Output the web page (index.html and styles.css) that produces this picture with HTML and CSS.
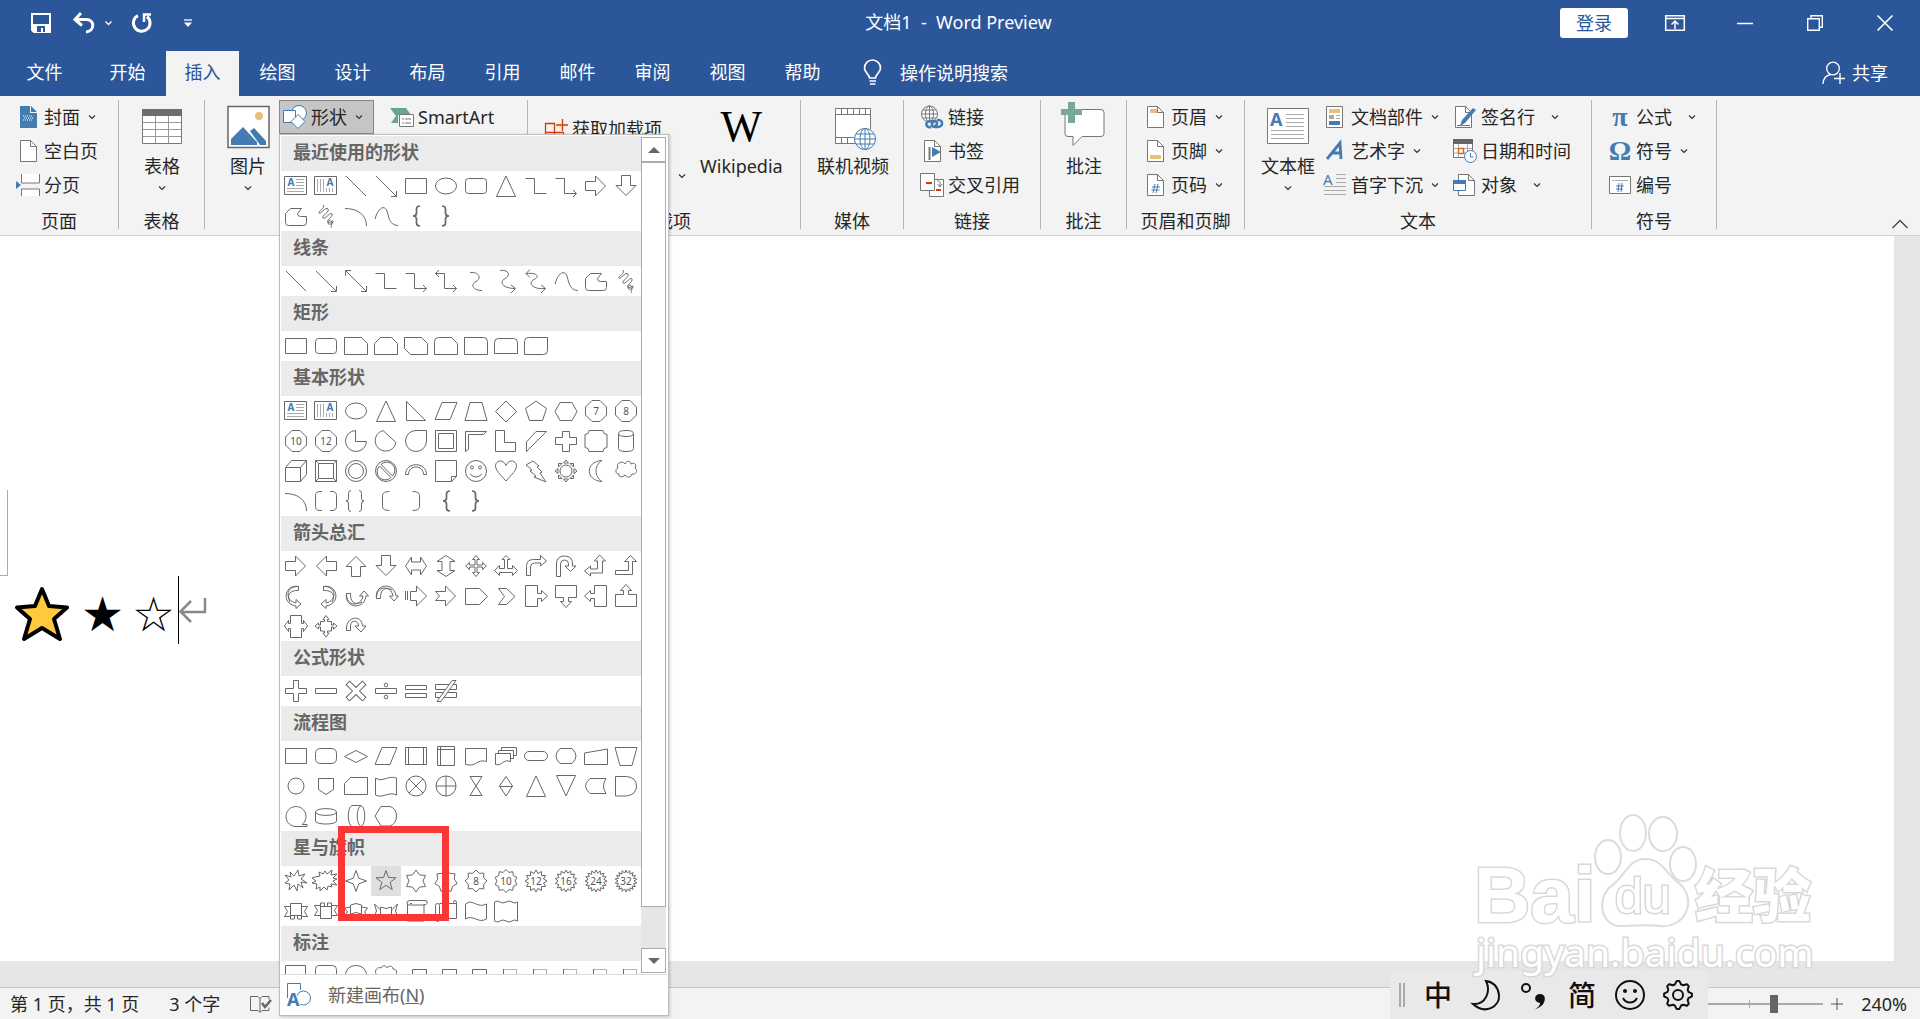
FILE: index.html
```html
<!DOCTYPE html>
<html lang="zh-CN">
<head>
    <meta charset="UTF-8">
    <title>文档1 - Word Preview</title>
    <link rel="stylesheet" href="styles.css">
</head>
<body>
    <svg class="defs" width="0" height="0">
        <symbol id="chev" viewBox="0 0 8 8"><path d="M1 2.500l3 3 3-3" fill="none" stroke="#333" stroke-width="1.200"/></symbol>
        <symbol id="page" viewBox="0 0 24 24"><path d="M4.500 1.500h10l6 6v15h-16z" fill="#fff" stroke="#777"/><path d="M14.500 1.500v6h6" fill="none" stroke="#777"/></symbol>
    </svg>

    <header>
        <div class="titlebar">
            <div class="quick">
                <button class="q-btn" aria-label="保存"><svg width="20" height="20" viewBox="0 0 20 20"><path d="M1 1h18v18H3l-2-2z" fill="none" stroke="#fff" stroke-width="2"/><path d="M2 11h16v8H2z" fill="#fff"/><path d="M6 13h8v6h-2v-4h-2v4H6z" fill="#2b579a"/></svg></button>
                <div class="undo">
                    <button class="q-btn" aria-label="撤消"><svg width="24" height="22" viewBox="0 0 24 22"><path d="M9 1L3 7.500l7 6M3.500 7.500H14c9 0 9 12 0 12.500" fill="none" stroke="#fff" stroke-width="3"/></svg></button>
                    <svg width="10" height="10" viewBox="0 0 10 10"><path d="M1.500 3.500l3 3 3-3" fill="none" stroke="#fff" stroke-width="1.300"/></svg>
                </div>
                <button class="q-btn" aria-label="重复"><svg width="22" height="22" viewBox="0 0 22 22"><path d="M7 3.500A8.300 8.300 0 1 0 16 4.500" fill="none" stroke="#fff" stroke-width="3"/><path d="M13 10V2.500h7" fill="none" stroke="#fff" stroke-width="2.500"/></svg></button>
                <button class="q-more" aria-label="自定义"><svg width="8" height="8" viewBox="0 0 8 8"><path d="M0 1h8" stroke="#fff" stroke-width="1.300"/><path d="M0 3.500h8L4 8z" fill="#fff"/></svg></button>
            </div>
            <h1>文档1&nbsp; -&nbsp; Word Preview</h1>
            <div class="window-tools">
                <button class="login">登录</button>
                <button class="win-btn" aria-label="功能区显示选项"><svg width="20" height="16" viewBox="0 0 20 16"><path d="M.7.700h18.600v14.600H.7zM1 3.500h18M10 14V6M6.500 9.500L10 6l3.500 3.500" fill="none" stroke="#fff" stroke-width="1.500"/></svg></button>
                <button class="win-btn" aria-label="最小化"><svg width="16" height="16" viewBox="0 0 16 16"><path d="M0 8.500h16" stroke="#fff" stroke-width="1.500"/></svg></button>
                <button class="win-btn" aria-label="向下还原"><svg width="16" height="16" viewBox="0 0 16 16"><path d="M.7 3.700h11.600v11.600H.7zM4 3.500V.700h11.300v11.600h-3" fill="none" stroke="#fff" stroke-width="1.400"/></svg></button>
                <button class="win-btn" aria-label="关闭"><svg width="16" height="16" viewBox="0 0 16 16"><path d="M.5.500l15 15M15.500.500l-15 15" stroke="#fff" stroke-width="1.600"/></svg></button>
            </div>
        </div>
        <nav class="tabs">
            <button class="tab file">文件</button>
            <button class="tab">开始</button>
            <button class="tab active">插入</button>
            <button class="tab">绘图</button>
            <button class="tab">设计</button>
            <button class="tab">布局</button>
            <button class="tab">引用</button>
            <button class="tab">邮件</button>
            <button class="tab">审阅</button>
            <button class="tab">视图</button>
            <button class="tab">帮助</button>
            <button class="tell-me">
                <svg width="20" height="26" viewBox="0 0 20 26"><path d="M6.500 18c0-4-5-5-5-10a8 8 0 0 1 16 0c0 5-5 6-5 10zM6.500 21h6.500M7 24h5.500" fill="none" stroke="#fff" stroke-width="1.600"/></svg>
                操作说明搜索
            </button>
            <button class="share">
                <svg width="24" height="24" viewBox="0 0 24 24"><circle cx="11" cy="7.500" r="6.300" fill="none" stroke="#fff" stroke-width="1.300"/><path d="M1 23c0-5 3-9 8-9.500M18 12v11M12 17.500h11" fill="none" stroke="#fff" stroke-width="1.400"/></svg>
                共享
            </button>
        </nav>
    </header>

    <div class="ribbon">
        <section class="group g-pages">
            <div class="group-body">
                <div class="col">
                    <button class="item"><svg class="ico" viewBox="0 0 24 24"><path d="M4 1h10v7h7v15H4z" fill="#447bb3"/><path d="M15 1l6 6h-6z" fill="#447bb3"/><path d="M7 11h10M8 13h10M7 15h10" stroke="#fff" stroke-dasharray="1 1"/></svg>封面<svg class="chev"><use href="#chev"/></svg></button>
                    <button class="item"><svg class="ico"><use href="#page"/></svg>空白页</button>
                    <button class="item"><svg class="ico" viewBox="0 0 24 24"><path d="M5.500 1v9h18V1M5.500 23v-7h18v7" fill="#fff" stroke="#777"/><path d="M0 8l5 4-5 4z" fill="#447bb3"/></svg>分页</button>
                </div>
            </div>
            <h2>页面</h2>
        </section>
        <section class="group g-table">
            <div class="group-body">
                <button class="big"><svg class="big-ico" viewBox="0 0 46 44"><path d="M3.500 5.500h39v34h-39z" fill="#fff" stroke="#777"/><path d="M3 5h40v7H3z" fill="#6d6d6d"/><path d="M4 18.500h38M4 25.500h38M4 32.500h38M16.500 12v27M29.500 12v27" stroke="#999"/></svg>表格<svg class="chev"><use href="#chev"/></svg></button>
            </div>
            <h2>表格</h2>
        </section>
        <section class="group g-pics">
            <div class="group-body">
                <button class="big"><svg class="big-ico" viewBox="0 0 46 44"><path d="M3 2.500h41v41H3z" fill="#fff" stroke="#666" stroke-width="1.500"/><circle cx="34" cy="12" r="4" fill="#e8bf78"/><path d="M6 41v-6l12-12 14 15v3z" fill="#447bb3"/><path d="M25 27l4-3 12 13v4h-6z" fill="#447bb3"/></svg>图片<svg class="chev"><use href="#chev"/></svg></button>
                <div class="shapes-wrap">
                    <button class="item open"><svg class="ico" viewBox="0 0 24 24"><circle cx="16" cy="8" r="7.500" fill="#fff" stroke="#447bb3"/><path d="M.5 5.500h12v12H.5z" fill="#fff" stroke="#447bb3"/><path d="M15 9.500l7 7-7 7-7-7z" fill="#fff" stroke="#447bb3"/></svg>形状<svg class="chev"><use href="#chev"/></svg></button>
                    <div class="menu">
                        <div class="menu-main">
                            <div class="gallery" id="gallery"></div>
                            <div class="scroll">
                                <button aria-label="向上"><svg width="12" height="6"><path d="M0 6l6-6 6 6z" fill="#666"/></svg></button>
                                <div class="thumb"></div>
                                <button aria-label="向下"><svg width="12" height="6"><path d="M0 0h12L6 6z" fill="#666"/></svg></button>
                            </div>
                        </div>
                        <button class="new-canvas"><svg class="ico" viewBox="0 0 24 24"><path d="M.5 15V.500h13V7" fill="none" stroke="#447bb3"/><circle cx="16.500" cy="15" r="7" fill="#fff" stroke="#447bb3"/><text x="0" y="23" font-size="18" font-weight="bold" fill="#447bb3" stroke="#fff" stroke-width="2" paint-order="stroke">A</text></svg><span>新建画布(<u>N</u>)</span></button>
                    </div>
                </div>
                <button class="item"><svg class="ico" viewBox="0 0 24 24"><path d="M0 3h16l5 7H8v8H1l5-7z" fill="#67a58e"/><path d="M9.500 9.500h14v12h-14z" fill="#fff" stroke="#777"/><path d="M12 14h2M15 14h6M12 18h2M15 18h6" stroke="#777"/></svg>SmartArt</button>
            </div>
        </section>
        <section class="group g-addins">
            <div class="group-body">
                <button class="item get"><svg class="ico" viewBox="0 0 24 24"><path d="M1.500 6.500h9v17h-9zM1.500 15.500h18v8h-9v-8M18.500 2v12M12 8h12" fill="none" stroke="#d83b01" stroke-width="1.300"/></svg>获取加载项</button>
                <svg class="chev my"><use href="#chev"/></svg>
                <button class="big wiki"><span class="wiki-w">W</span>Wikipedia</button>
            </div>
            <h2>加载项</h2>
        </section>
        <section class="group g-media">
            <div class="group-body">
                <button class="big"><svg class="big-ico" viewBox="0 0 46 44"><path d="M5.500 4.500h35v35h-35z" fill="#fff" stroke="#777"/><path d="M6 10.500h34M6 33.500h34M11.500 5v5M17.500 5v5M23.500 5v5M29.500 5v5M35.500 5v5M11.500 34v5M17.500 34v5" stroke="#777"/><circle cx="35" cy="35" r="11" fill="#f3f3f3"/><g transform="translate(24 24)" fill="#fff" stroke="#447bb3"><circle cx="11" cy="11" r="10.500"/><ellipse cx="11" cy="11" rx="5" ry="10.500"/><path d="M11 0v22M0 11h22M2 6h18M2 16h18" fill="none"/></g></svg>联机视频</button>
            </div>
            <h2>媒体</h2>
        </section>
        <section class="group g-links">
            <div class="group-body">
                <div class="col">
                    <button class="item"><svg class="ico" viewBox="0 0 24 24"><g fill="#fff" stroke="#777"><circle cx="9.500" cy="9" r="8"/><ellipse cx="9.500" cy="9" rx="4" ry="8"/><path d="M1.500 9h16M3 5h13M3 13h13M9.500 1v16" fill="none"/></g><path d="M11 22c-5 1-7-5-1-6h4c4 0 4 5 0 5M17 15c6-1 7 6 1 7h-3c-4 0-4-4-1-5" fill="none" stroke="#447bb3" stroke-width="2.500"/></svg>链接</button>
                    <button class="item"><svg class="ico"><use href="#page"/><path d="M9.500 8v13" stroke="#777" stroke-width="2"/><path d="M12 8l9 5-9 5z" fill="#447bb3"/></svg>书签</button>
                    <button class="item"><svg class="ico" viewBox="0 0 24 24"><path d="M9.500 6.500h14v17h-14z" fill="#fff" stroke="#777"/><path d="M.5.500h14v17H.5z" fill="#fff" stroke="#777"/><path d="M6 10h6M16 17h5" stroke="#d83b01" stroke-width="2"/><path d="M17 8c4 0 3 2 3 5M17.500 11l2.500 3 2-3" fill="none" stroke="#777"/></svg>交叉引用</button>
                </div>
            </div>
            <h2>链接</h2>
        </section>
        <section class="group g-comment">
            <div class="group-body">
                <button class="big"><svg class="big-ico" viewBox="0 0 46 44"><path d="M7 5.500h33q3 0 3 3v21q0 3-3 3H21l-9 9v-9H7q-3 0-3-3v-21q0-3 3-3z" fill="#fff" stroke="#777"/><path d="M7-2h7v7h7v6h-7v8H7v-8H0V5h7z" fill="#77a898"/></svg>批注</button>
            </div>
            <h2>批注</h2>
        </section>
        <section class="group g-header">
            <div class="group-body">
                <div class="col">
                    <button class="item"><svg class="ico"><use href="#page"/><path d="M7 4h7v4H7z" fill="#e8bf78"/></svg>页眉<svg class="chev"><use href="#chev"/></svg></button>
                    <button class="item"><svg class="ico"><use href="#page"/><path d="M7 16h11v4H7z" fill="#e8bf78"/></svg>页脚<svg class="chev"><use href="#chev"/></svg></button>
                    <button class="item"><svg class="ico"><use href="#page"/><path d="M12 11l-2 9M15 11l-2 9M9 14h8M8.500 17h8" stroke="#447bb3"/></svg>页码<svg class="chev"><use href="#chev"/></svg></button>
                </div>
            </div>
            <h2>页眉和页脚</h2>
        </section>
        <section class="group g-text">
            <div class="group-body">
                <button class="big"><svg class="big-ico" viewBox="0 0 46 44"><path d="M2.500 4.500h41v35h-41z" fill="#fff" stroke="#777"/><path d="M21 10.500h18M21 14.500h18M21 18.500h18M21 22.500h18M6 26.500h33M6 30.500h33M6 34.500h33" stroke="#aaa"/><text x="5" y="22" font-size="18" font-weight="bold" fill="#447bb3">A</text></svg>文本框<svg class="chev"><use href="#chev"/></svg></button>
                <div class="col">
                    <button class="item"><svg class="ico" viewBox="0 0 24 24"><path d="M3.500 1.500h16v21h-16z" fill="#fff" stroke="#777"/><path d="M6 4h11v4H6z" fill="#e8bf78"/><path d="M6 10h5v4H6z" fill="#aaa"/><path d="M13 10.500h4M13 13.500h4" stroke="#aaa"/><path d="M6 16h11v4H6z" fill="#447bb3"/></svg>文档部件<svg class="chev"><use href="#chev"/></svg></button>
                    <button class="item"><svg class="ico" viewBox="0 0 24 24"><path d="M4 20L17 4l1 16M9 14h9" fill="none" stroke="#447bb3" stroke-width="2.800"/></svg>艺术字<svg class="chev"><use href="#chev"/></svg></button>
                    <button class="item"><svg class="ico" viewBox="0 0 24 24"><path d="M13 1.500h10M13 5.500h10M13 9.500h10M1 13.500h22M1 17.500h22M1 21.500h22" stroke="#aaa"/><text x="0" y="12" font-size="15" fill="#447bb3">A</text></svg>首字下沉<svg class="chev"><use href="#chev"/></svg></button>
                </div>
                <div class="col">
                    <button class="item"><svg class="ico"><use href="#page" x="-2"/><path d="M20 3l3 2L12 18l-5 3 2-6z" fill="#447bb3"/><path d="M4 20.500h13" stroke="#447bb3"/></svg>签名行<svg class="chev far"><use href="#chev"/></svg></button>
                    <button class="item"><svg class="ico" viewBox="0 0 24 24"><path d="M.5 1.500h19v17H.5z" fill="#fff" stroke="#777"/><path d="M0 0h20v5H0z" fill="#666"/><path d="M1 9.500h18M1 14h18M5.500 5v13M14.500 5v13" stroke="#aaa"/><path d="M5.500 9.500h5v5h-5z" fill="#fff" stroke="#d86b20" stroke-width="1.500"/><circle cx="17.500" cy="17.500" r="6" fill="#fff" stroke="#447bb3"/><path d="M17.500 14v4h3" fill="none" stroke="#447bb3"/></svg>日期和时间</button>
                    <button class="item"><svg class="ico"><use href="#page" x="1"/><path d="M.5 7.500h12v10H.5z" fill="#fff" stroke="#447bb3"/><path d="M0 7h13v4H0z" fill="#447bb3"/></svg>对象<svg class="chev far"><use href="#chev"/></svg></button>
                </div>
            </div>
            <h2>文本</h2>
        </section>
        <section class="group g-symbol">
            <div class="group-body">
                <div class="col">
                    <button class="item"><span class="ico glyph">π</span>公式<svg class="chev far"><use href="#chev"/></svg></button>
                    <button class="item"><span class="ico glyph">Ω</span>符号<svg class="chev"><use href="#chev"/></svg></button>
                    <button class="item"><svg class="ico" viewBox="0 0 24 24"><path d="M1.500 3.500h21v17h-21z" fill="#fff" stroke="#777"/><path d="M4 7.500h2M7 7.500h13" stroke="#aaa"/><path d="M11 10l-1 9M14 10l-1 9M8 13h8M8 16h7" stroke="#447bb3"/></svg>编号</button>
                </div>
            </div>
            <h2>符号</h2>
        </section>
        <button class="collapse" aria-label="折叠功能区"><svg width="16" height="10" viewBox="0 0 16 10"><path d="M.5 9L8 1.500 15.500 9" fill="none" stroke="#444" stroke-width="1.300"/></svg></button>
    </div>

    <main class="workspace">
        <div class="sheet">
            <div class="margin-corner"></div>
            <div class="doc-line">
                <svg class="emoji" width="56" height="56" viewBox="0 0 56 56"><path d="M28 3l7 17 18 1.500L40 33l6 20-18-11-18 11 6-20L3 21.500 21 20z" fill="#ffc83d" stroke="#000" stroke-width="4" stroke-linejoin="round"/></svg>
                <span>★</span>
                <span>☆</span>
                <i class="caret"></i>
                <svg class="return" width="28" height="28" viewBox="0 0 28 28"><path d="M26 2v14H2M12 5L1.500 15.500 12 26" fill="none" stroke="#888" stroke-width="2.500"/></svg>
            </div>
        </div>
    </main>

    <footer class="status">
        <span>第 1 页，共 1 页</span>
        <span>3 个字</span>
        <svg width="22" height="18" viewBox="0 0 22 18"><path d="M10 3.500L8 1.500H.5v14H8l2 2 2-2h7v-3M10 3v14M10 3.500l2-2h7v3" fill="none" stroke="#666"/><path d="M12 8l3 4 6-7" fill="none" stroke="#666" stroke-width="2.500"/></svg>
        <div class="zoom">
            <input type="range" min="0" max="100" value="68" aria-label="缩放">
            <button aria-label="放大"><svg width="12" height="12"><path d="M6 0v12M0 6h12" stroke="#555"/></svg></button>
            <span>240%</span>
        </div>
    </footer>

    <svg class="watermark" width="350" height="180" viewBox="0 0 350 180">
        <g fill="#fff" stroke="#dcdcdc" stroke-width="2">
            <ellipse cx="134" cy="45" rx="13" ry="17"/>
            <ellipse cx="159" cy="21" rx="13" ry="18"/>
            <ellipse cx="189" cy="22" rx="14" ry="17"/>
            <ellipse cx="209" cy="52" rx="13" ry="17"/>
            <path d="M171 47c-17 0-20 18-35 28-14 13-9 40 12 39 12 0 24-2 38 0 24 3 38-25 20-42-16-12-18-25-35-25z"/>
        </g>
        <g class="mark">
            <text x="0" y="110" class="wm-bai">Bai</text>
            <text x="141" y="101" class="wm-du">du</text>
            <text x="221" y="105" class="wm-cn">经验</text>
            <text x="2" y="155" class="wm-url">jingyan.baidu.com</text>
        </g>
    </svg>

    <div class="ime">
        <i class="grip"></i>
        <button>中</button>
        <button aria-label="半角"><svg width="30" height="32" viewBox="0 0 30 32"><path d="M15 2c5 10 0 24-13 23 12 11 27 3 26-9C27 8 22 3 15 2z" fill="none" stroke="#111" stroke-width="2"/></svg></button>
        <button aria-label="标点"><svg width="30" height="32" viewBox="0 0 30 32"><circle cx="7" cy="9" r="4" fill="none" stroke="#111" stroke-width="2"/><path d="M16 30c4-2 5-4 5-6-7-1-6-9 0-9 8 0 6 13-5 15z" fill="#111"/></svg></button>
        <button>简</button>
        <button aria-label="表情"><svg width="32" height="32" viewBox="0 0 32 32"><circle cx="16" cy="16" r="14" fill="none" stroke="#111" stroke-width="2"/><circle cx="11" cy="12" r="2" fill="#111"/><circle cx="21" cy="12" r="2" fill="#111"/><path d="M9 19c3 6 11 6 14 0" fill="none" stroke="#111" stroke-width="2"/></svg></button>
        <button aria-label="设置"><svg width="32" height="32" viewBox="0 0 32 32"><path id="gear" fill="none" stroke="#111" stroke-width="2" stroke-linejoin="round"/><circle cx="16" cy="16" r="5" fill="none" stroke="#111" stroke-width="2"/></svg></button>
    </div>

    <script src="script.js"></script>
</body>
</html>
```
FILE: styles.css
```css
* {
    box-sizing: border-box;
}
body {
    margin: 0;
    height: 100vh;
    display: flex;
    flex-direction: column;
    position: relative;
    overflow: hidden;
    background: #e6e6e6;
    color: #262626;
    font: 18px/24px "Noto Sans", "Noto Sans CJK SC", sans-serif;
}
button {
    margin: 0;
    padding: 0;
    border: 0;
    background: none;
    color: inherit;
    font: inherit;
    white-space: nowrap;
}
svg {
    display: block;
    flex: none;
    overflow: visible;
}
.defs {
    position: absolute;
}
h1, h2, h3 {
    margin: 0;
    font-size: 18px;
    font-weight: normal;
}

/* title bar */
header {
    background: #2b579a;
    color: #fff;
}
.titlebar {
    height: 51px;
    padding-bottom: 5px;
    display: grid;
    grid-template-columns: 1fr auto 1fr;
    align-items: center;
}
.titlebar h1 {
    padding: 0 3px 2px 0;
}
.quick {
    display: flex;
    align-items: center;
    gap: 13px;
    padding-left: 26px;
}
.q-btn {
    width: 30px;
    display: flex;
    justify-content: center;
}
.undo {
    display: flex;
    align-items: center;
    gap: 5px;
}
.q-more {
    margin-left: 14px;
}
.window-tools {
    display: flex;
    justify-content: flex-end;
    align-items: center;
}
.login {
    width: 68px;
    height: 30px;
    margin-right: 12px;
    border-radius: 3px;
    background: #fff;
    color: #2b579a;
}
.win-btn {
    width: 70px;
    display: flex;
    justify-content: center;
}

/* tabs */
.tabs {
    display: flex;
    height: 45px;
}
.tab {
    width: 73px;
    margin-right: 2px;
    padding-bottom: 3px;
}
.tab.file {
    width: 89px;
}
.tab.active {
    background: #f3f3f3;
    color: #2b579a;
}
.tell-me, .share {
    display: flex;
    align-items: center;
    gap: 17px;
    margin-left: 22px;
    padding-bottom: 2px;
}
.share {
    gap: 6px;
    margin-left: auto;
    margin-right: 32px;
}

/* ribbon */
.ribbon {
    display: flex;
    height: 140px;
    padding: 4px 0 6px;
    background: #f3f3f3;
    border-bottom: 1px solid #d0d0d0;
}
.group {
    flex: none;
    height: 129px;
    padding-left: 16px;
    border-right: 1px solid #b4b4b4;
}
.g-pages { width: 119px; }
.g-table { width: 86px; }
.g-pics { width: 323px; }
.g-addins { width: 273px; }
.g-media { width: 103px; }
.g-links { width: 137px; }
.g-comment { width: 86px; }
.g-header { width: 118px; }
.g-text { width: 347px; }
.g-symbol { width: 125px; }
.group h2 {
    margin-left: -16px;
    text-align: center;
    white-space: nowrap;
}
.group-body {
    display: flex;
    align-items: flex-start;
    height: 109px;
}
.item {
    display: flex;
    align-items: center;
    gap: 4px;
    height: 34px;
}
.ico {
    width: 24px;
    height: 24px;
    flex: none;
}
.glyph {
    color: #447bb3;
    font: bold 28px/24px "Liberation Serif", serif;
    text-align: center;
}
.chev {
    width: 8px;
    height: 8px;
    margin-left: 4px;
}
.chev.far {
    margin-left: 12px;
}
.big {
    min-width: 54px;
    display: flex;
    flex-direction: column;
    align-items: center;
    padding-top: 4px;
}
.big-ico {
    width: 46px;
    height: 44px;
    margin-bottom: 6px;
}
.big .chev {
    margin: 6px 0 0;
}
.g-text .group-body {
    gap: 8px;
}
.g-text .col + .col {
    margin-left: 6px;
}
.open {
    padding: 0 10px 0 3px;
    background: #c5c5c5;
    border: 1px solid #888;
}
.shapes-wrap {
    position: relative;
    margin-left: 4px;
    margin-right: 16px;
}
.get {
    margin-top: 12px;
}
.my {
    margin: 72px 14px 0 16px;
}
.wiki-w {
    height: 44px;
    margin-bottom: 6px;
    color: #000;
    font: 44px/46px "Liberation Serif", serif;
}
.collapse {
    align-self: flex-end;
    margin-left: auto;
    margin-right: 12px;
}

/* shapes menu */
.menu {
    position: absolute;
    top: 34px;
    left: 0;
    z-index: 5;
    width: 390px;
    background: #fff;
    border: 1px solid #bdbdbd;
    box-shadow: 1px 1px 3px rgba(0, 0, 0, 0.2);
    padding: 1px;
}
.menu-main {
    display: flex;
    height: calc(100vh - 180px);
    border-bottom: 1px solid #dcdcdc;
}
.gallery {
    width: 360px;
    position: relative;
    overflow: hidden;
}
.gallery h3 {
    height: 35px;
    padding-left: 12px;
    background: #ebebeb;
    color: #666;
    font-weight: bold;
    line-height: 32px;
}
.shapes {
    display: grid;
    grid-template-columns: repeat(12, 30px);
}
.shape {
    width: 30px;
    height: 30px;
}
.shape svg {
    fill: none;
    stroke: #686868;
}
.shape text {
    fill: #555;
    stroke: none;
    font-size: 10px;
    text-anchor: middle;
}
.shape text.a {
    fill: #447bb3;
    font-weight: bold;
}
.shape.on {
    background: #e0dfdf;
}
.stars {
    position: relative;
}
.highlight {
    position: absolute;
    left: 57px;
    top: -5px;
    width: 111px;
    height: 95px;
    border: 7px solid #fc3636;
}
.scroll {
    width: 25px;
    margin: 1px 0;
    display: flex;
    flex-direction: column;
    background: #e6e6e6;
}
.scroll button, .thumb {
    background: #fff;
    border: 1px solid #ababab;
}
.scroll button {
    height: 25px;
    display: flex;
    align-items: center;
    justify-content: center;
}
.thumb {
    flex: 1;
    margin-bottom: 41px;
}
.new-canvas {
    display: flex;
    align-items: center;
    gap: 17px;
    height: 39px;
    padding-left: 6px;
    color: #666;
}

/* document */
.workspace {
    flex: 1;
    padding: 0 26px 26px 0;
}
.sheet {
    height: 100%;
    background: #fff;
    padding-top: 254px;
}
.margin-corner {
    width: 8px;
    height: 86px;
    border-right: 1px solid #aaa;
    border-bottom: 1px solid #aaa;
}
.doc-line {
    display: flex;
    align-items: center;
    height: 68px;
    padding-left: 14px;
    color: #000;
    font: 48px/68px "DejaVu Sans", sans-serif;
}
.doc-line span {
    width: 40px;
    margin-left: 11px;
    padding-top: 8px;
    text-align: center;
}
.emoji {
    margin-top: 8px;
}
.caret {
    width: 1px;
    height: 68px;
    margin-left: 6px;
    background: #000;
}

/* status bar */
.status {
    display: flex;
    align-items: center;
    gap: 30px;
    height: 32px;
    padding-left: 10px;
    background: #f3f3f3;
    border-top: 1px solid #c6c6c6;
}
.zoom {
    display: flex;
    align-items: center;
    gap: 8px;
    margin-left: auto;
    margin-right: 13px;
}
.zoom span {
    margin-left: 10px;
}
.zoom input {
    -webkit-appearance: none;
    appearance: none;
    width: 148px;
    height: 18px;
    margin: 0;
    background: linear-gradient(#aaa, #aaa) center / 1px 8px no-repeat,
        linear-gradient(#aaa, #aaa) center / 100% 2px no-repeat;
}
.zoom input::-webkit-slider-thumb {
    -webkit-appearance: none;
    width: 8px;
    height: 18px;
    background: #666;
}

/* watermark and input method bar float over the window */
.watermark {
    position: absolute;
    right: 96px;
    bottom: 27px;
    z-index: 7;
    pointer-events: none;
}
.mark text {
    fill: #fff;
    stroke: #d8d8d8;
    stroke-width: 3px;
    paint-order: stroke;
}
.wm-bai {
    font: bold 78px "Liberation Sans", sans-serif;
}
.wm-du {
    font: 50px "Liberation Sans", sans-serif;
}
.wm-cn {
    font: 900 58px "Noto Sans CJK SC", sans-serif;
}
.wm-url {
    font: 39px "Noto Sans", sans-serif;
}
.ime {
    position: absolute;
    right: 212px;
    bottom: 0;
    z-index: 6;
    display: flex;
    align-items: center;
    width: 318px;
    height: 48px;
    padding-left: 9px;
    background: #e9e9e9;
    color: #111;
    font-size: 28px;
    font-weight: 500;
}
.ime button {
    width: 48px;
    display: flex;
    justify-content: center;
}
.grip {
    width: 6px;
    height: 24px;
    margin-right: 9px;
    border: 2px solid #aaa;
    border-width: 0 2px;
}
```
FILE: script.js
```js
// star polygon with n points, outer radius R and inner radius r
function star(n, R, r, cx = 15, cy = 15) {
    let d = '';
    for (let i = 0; i < n * 2; i++) {
        const a = Math.PI * i / n - Math.PI / 2;
        const q = i % 2 ? r : R;
        d += (i ? 'L' : 'M') + (cx + q * Math.cos(a)).toFixed(1) + ' ' + (cy + q * Math.sin(a)).toFixed(1);
    }
    return d + 'z';
}
const path = d => '<path d="' + d + '"/>';
const turn = (d, deg) => '<g transform="rotate(' + deg + ' 15 15)">' + path(d) + '</g>';
const flip = d => '<g transform="matrix(-1 0 0 1 30 0)">' + path(d) + '</g>';
const num = (d, n) => path(d) + '<text x="15" y="18.5">' + n + '</text>';

const octagon = 'M11 4.500h8l6.500 6.500v8l-6.500 6.500h-8L4.500 19v-8z';
const arrow = 'M4.500 10.500h10V5l10 10-10 10v-5.500h-10z';
const doubleArrow = 'M4.500 15l6-9v5h9V6l6 9-6 9v-5h-9v5z';
const brace = 'M19 5q-3.500 0-3.500 3v4q0 3-3.500 3 3.500 0 3.500 3v4q0 3 3.500 3';
const triangle = 'M15 5l9.500 20.500h-19z';
const uTurn = 'M5.500 25.500V13q0-8 8-8t8 8v2h3.500l-5.500 5.500L14 15h3.500v-2q0-4-4-4t-4 4v12.500z';
const bentUp = 'M4.500 19.500h13v-9h-4l6-6 6 6h-4v13h-17z';
const curveArrow = 'M17.500 5.500C4 5 4 20 15 22v-3.500l5 4.500-5 4.500V25C0 23 3 3 17.500 5.500zM9 21C5 14 9 9 17.500 9.500v-4';
const callout = 'M4.500 4.500h12v8h4v-3l6 5.500-6 5.500v-3h-4v8h-12z';
const ribbonUp = 'M9.500 7.500h11v12h-11zM9.500 10.500h-6l3 5-3 5h6M20.500 10.500h6l-3 5 3 5h-6M9.500 17v6h4v-3.500M20.500 17v6h-4v-3.500';
const vertScroll = 'M9 4.500h15q3 0 2 3-1 2-3 1V25H6.500V8.500M9 4.500q-3 0-3 2.500t3 2h14M9 7.500h2';

const icons = {
    textbox: path('M3.500 5.500h22v18h-22z') + '<path stroke="#aaa" d="M15 8.500h8M15 11.500h8M15 14.500h8M6 17.500h17M6 20.500h17"/><text class="a" x="10" y="15">A</text>',
    vtextbox: path('M3.500 5.500h22v18h-22z') + '<path stroke="#aaa" d="M6.500 8v13M9.500 8v13M12.500 8v13M15.500 17v4M18.500 17v4M21.500 17v4"/><text class="a" x="19" y="15">A</text>',
    line: path('M5 5l20 20'),
    arrowLine: path('M5 5l20 20M25.500 20v5.500H20'),
    arrowLine2: path('M5 5l20 20M25.500 20v5.500H20M4.500 10V4.500H10'),
    rect: path('M4.500 7.500h21v15h-21z'),
    ellipse: '<ellipse cx="15" cy="15" rx="10.500" ry="8"/>',
    round: '<rect x="4.500" y="7.500" width="21" height="15" rx="3"/>',
    triangle: path(triangle),
    elbow: path('M4.500 7.500h9v15h12'),
    elbowArrow: path('M4.500 7.500h9v15h12M22 19l3.500 3.500L22 26'),
    elbowArrow2: path('M4.500 7.500h9v15h12M22 19l3.500 3.500L22 26M8 4L4.500 7.500 8 11'),
    right: path(arrow), left: turn(arrow, 180), up: turn(arrow, -90), down: turn(arrow, 90),
    freeform: path('M4.500 12.500l5-5h11l-4 5q0 3 3 3h6v6q0 3-3 3h-15q-3 0-3-3z'),
    scribble: path('M12 4c3 3-5 6-4 8s7-7 9-4-7 7-5 9 8-7 9-4-6 6-4 8 6-3 5 0-6 3-5 0 4-2 4 1-2 3 0 5'),
    arc: path('M4 7.500C17 7.500 25.500 14 25.500 25'),
    curve: path('M4 18C7 7 13 4 15.500 9S17 24 27 24.500'),
    lbrace: '<path stroke-width="1.700" d="' + brace + '"/>',
    rbrace: '<g stroke-width="1.700">' + flip(brace) + '</g>',
    s: path('M9 6.500c9-1 12 6 6 9s-3 9 6 9'),
    sArrow: path('M9 4.500c9-1 11 5 5 8s-3 10 10 10M20 19l4.500 3.500L20 27'),
    sArrow2: path('M5 7.500c12-1 14 3 8 6s-3 10 11 9M20 19l4.500 3.500L20 27M9 3.500l-4 4 4 4'),
    snip1: path('M3.500 6.500h17l6 6v11h-23z'),
    snip2: path('M9.500 6.500h11l6 6v11h-23v-11z'),
    snipDiag: path('M3.500 6.500h17l6 6v11h-17l-6-6z'),
    snipRound: path('M7.500 6.500h13l6 6v11h-23v-13q0-4 4-4z'),
    round1: path('M3.500 6.500h19q4 0 4 4v13h-23z'),
    round2: path('M7.500 7.500h15q4 0 4 4v11h-23v-11q0-4 4-4z'),
    roundDiag: path('M7.500 6.500h19v13q0 4-4 4h-19v-13q0-4 4-4z'),
    rightTri: path('M5.500 5.500l19 19h-19z'),
    para: path('M11 6.500h15l-7 17H4z'),
    trap: path('M9 6.500h12l5 18H4z'),
    diamond: path('M15 5l10.500 10.500L15 26 4.500 15.500z'),
    pentagon: path('M15 5l10.500 7.500-4 12h-13l-4-12z'),
    hexagon: path('M9 6.500h12l5 9-5 9H9l-5-9z'),
    n7: num(octagon, 7), n8: num(octagon, 8), n10: num(octagon, 10), n12: num(octagon, 12),
    pie: path('M14.500 4.500a10.500 10.500 0 1 0 11 11h-11z'),
    chord: path('M12 4.500l13 12a10.500 10.500 0 1 1-13-12z'),
    tear: path('M15 4.500h10.500V15A10.500 10.500 0 1 1 15 4.500z'),
    frame: path('M4.500 4.500h21v21h-21zM7.500 7.500h15v15h-15z'),
    halfFrame: path('M4.500 5.500h21l-3 3h-15v15l-3 2z'),
    lShape: path('M4.500 4.500h9v12h11v9h-20z'),
    stripe: path('M15 5.500h10.500l-20 20V16z'),
    cross: path('M11.500 5.500h7v6h7v7h-7v7h-7v-7h-7v-7h7z'),
    plaque: path('M8 4.500h14q0 4 4 4v13q-4 0-4 4H8q0-4-4-4v-13q4 0 4-4z'),
    can: path('M7.500 7.500v15q0 3 7.500 3t7.500-3v-15q0-3-7.500-3t-7.500 3q0 3 7.500 3t7.500-3'),
    cube: path('M4.500 11.500h15v14h-15zM4.500 11.500l6-7h15l-6 7M25.500 4.500v14l-6 7'),
    bevel: path('M4.500 4.500h21v21h-21zM7.500 7.500h15v15h-15zM4.500 4.500l3 3M25.500 4.500l-3 3M4.500 25.500l3-3M25.500 25.500l-3-3'),
    donut: '<circle cx="15" cy="15" r="10.500"/><circle cx="15" cy="15" r="7.500"/>',
    no: '<circle cx="15" cy="15" r="10.500"/><path d="M10 8.500a8 8 0 0 1 11.500 11.500zM8.500 10a8 8 0 0 0 11.500 11.500z"/>',
    blockArc: path('M4.500 18.500c0-13 21-13 21 0h-3c0-10-15-10-15 0z'),
    note: path('M4.500 4.500h21v16l-5 5h-16zM20.500 25.500v-5h5'),
    smile: '<circle cx="15" cy="15" r="10.500"/><circle cx="11" cy="11.500" r="1.500"/><circle cx="19" cy="11.500" r="1.500"/><path d="M9 18q6 6 12 0"/>',
    heart: path('M15 9.500c3-7 10-5 10.500 0 0 5-4 8-10.500 15.500C8.500 17.500 4.500 14.500 4.500 9.500c.5-5 7.500-7 10.500 0z'),
    bolt: path('M12 5l-7 4 6 5-2 1 6 5-2 1 12 5-6-9 2-1-5-5 2-1z'),
    sun: '<circle cx="15" cy="15" r="6"/><path d="M12.500 7l2.500-3 2.500 3zM12.500 23l2.500 3 2.500-3zM7 12.500L4 15l3 2.500zM23 12.500l3 2.500-3 2.500zM7.500 11V7.500H11zM22.500 11V7.500H19zM7.500 19v3.500H11zM22.500 19v3.500H19z"/>',
    moon: path('M21 4.500c-17 1-17 20 0 21-8-5-8-16 0-21z'),
    cloud: path('M7 12c-3-5 5-8 7-4 2-4 6-3 6 0 4-2 6 1 4 4 4 3 0 7-3 6-1 4-5 4-7 1-3 3-7 2-6-1-4 0-4-5-1-6z'),
    brackets: path('M11 5.500H9q-4.500 0-4.500 4v11q0 4 4.500 4h2M19 5.500h2q4.500 0 4.500 4v11q0 4-4.500 4h-2'),
    braces: path('M10 4.500q-2.500 0-2.500 3v5q0 2.500-2.500 2.500 2.500 0 2.500 3v5q0 2.500 2.500 2.500M18 4.500q2.500 0 2.500 3v5q0 2.500 2.500 2.500-2.500 0-2.500 3v5q0 2.500-2.500 2.500'),
    lbracket: path('M18.500 5.500q-7 0-7 4v11q0 4 7 4'),
    rbracket: path('M11.500 5.500q7 0 7 4v11q0 4-7 4'),
    leftRight: path(doubleArrow), upDown: turn(doubleArrow, 90),
    quad: path('M15 4.500l3.500 4H16v5.500h5.500v-2.500L25.500 15l-4 3.500V16H16v5.500h2.500l-3.500 4-3.500-4H14V16H8.500v2.500l-4-3.500 4-3.500V14H14V8.500h-2.500z'),
    triArrow: path('M15 4.500l4 4h-2.500v9h5v-3l5 5-5 5v-3h-13v3l-5-5 5-5v3h5v-9H11z'),
    bent: path('M5.500 24.500v-9q0-7 7-7h7V4.500l6 5.500-6 5v-3h-6q-4 0-4 4v8.500z'),
    uTurn: path(uTurn),
    leftUp: path('M3.500 20l6-5v3h7v-8h-3l5-6 6 6h-3v12h-12v3z'),
    bentUp: path(bentUp),
    curveR: path(curveArrow), curveL: flip(curveArrow),
    curveU: '<g transform="rotate(-90 15 15)">' + path(curveArrow) + '</g>',
    curveD: '<g transform="matrix(0 1 1 0 0 0)">' + path(curveArrow) + '</g>',
    striped: path('M4.500 10v9M6.500 10v9M9.500 10.500h6V5l10 10-10 10v-5.500h-6z'),
    notched: path('M4.500 10.500h10V5l10 10-10 10v-5.500h-10l4-4.500z'),
    pent: path('M4.500 7.500h14l8 8-8 8h-14z'),
    chevron: path('M7.500 7.500h8l8.500 8-8.500 8h-8l6-8z'),
    callR: path(callout), callD: turn(callout, 90), callL: turn(callout, 180), callU: turn(callout, -90),
    callLR: path('M9.500 4.500h11v8h2v-3l4 5.500-4 5.500v-3h-2v9h-11v-9h-2v3l-4-5.500 4-5.500v3h2z'),
    callQ: path('M15 4.500l3 4h-1.500v2h4V14h2v-2l3.500 3-3.500 3v-2h-2v4h-4v2H18l-3 4-3-4h1.500v-2h-4v-4h-2v2L4 15l3.500-3v2h2v-3.500h4v-2H12z'),
    circular: path('M5.500 19.500C4 5 21 3 21.500 15h3.500l-5 6-6-6h3.500c0-6-8-7-8 0v4.500z'),
    plus: path('M12.500 4.500h5v8h8v5h-8v8h-5v-8h-8v-5h8z'),
    minus: path('M4.500 12.500h21v5h-21z'),
    times: turn('M12.500 3.500h5v9h9v5h-9v9h-5v-9h-9v-5h9z', 45),
    divide: path('M4.500 12.500h21v5h-21z') + '<circle cx="15" cy="9" r="1.800"/><circle cx="15" cy="21" r="1.800"/>',
    equal: path('M4.500 9.500h21v4h-21zM4.500 17.500h21v4h-21z'),
    notEqual: path('M4.500 8.500h21v5h-21zM4.500 16.500h21v5h-21z') + '<path fill="#fff" d="M21 4.500h4l-15 21H6z"/>',
    fRound: path('M10 7.500h10q5.500 0 5.500 5v5q0 5-5.500 5H10q-5.500 0-5.500-5v-5q0-5 5.500-5z'),
    fDiamond: path('M15 9.500l11.500 6-11.500 6-11.500-6z'),
    predef: path('M4.500 6.500h21v17h-21zM7.500 6.500v17M22.500 6.500v17'),
    internal: path('M6.500 5.500h17v19h-17zM9.500 5.500v19M6.500 8.500h17'),
    docu: path('M4.500 7.500h21v13c-10-3-10 6-21 3z'),
    docs: path('M4.500 12.500h15v8c-8-3-8 5-15 3zM7.500 12V9.500h15v8h-3M10.500 9V6.500h15v8h-3'),
    term: '<rect x="3.500" y="10.500" width="23" height="9" rx="4.500"/>',
    prep: path('M9 7.500h12q8 7.500 0 15H9q-8-7.500 0-15z'),
    manual: path('M3.500 12l23-4v15.500h-23z'),
    manualOp: path('M4 6.500h22l-5 18H9z'),
    conn: '<circle cx="15" cy="15" r="8"/>',
    offPage: path('M7.500 7.500h15v11l-7.500 5-7.500-5z'),
    card: path('M9.500 6.500h17v17h-23v-11z'),
    tape: path('M4.500 7c7 5 12-3 21 0v17c-8-4-14 4-21 0z'),
    junction: '<circle cx="15" cy="15" r="10"/><path d="M8 8l14 14M22 8L8 22"/>',
    or: '<circle cx="15" cy="15" r="10"/><path d="M15 5v20M5 15h20"/>',
    collate: path('M9 5.500h12L9 24.500h12z'),
    sort: path('M15 5.500l6.500 9.500-6.500 10L8.500 15zM8.500 15.500h13'),
    merge: turn(triangle, 180),
    stored: path('M9 7.500h16q-5 7.500 0 15H9q-9-7.500 0-15z'),
    delay: path('M4.500 5.500h11q10 1 10 9.500t-10 10h-11z'),
    seq: path('M21 23.500A10 10 0 1 0 15 25.500h11v-2h-5'),
    disk: path('M4.500 11v9c0 4 21 4 21 0v-9M4.500 11c0-4.500 21-4.500 21 0s-21 4.500-21 0'),
    direct: path('M11 4.500h9c5 2 5 19 0 21h-9c-5-2-5-19 0-21zM20 4.500c-5 2-5 19 0 21'),
    display: path('M10 5.500h9q6.500 2 6.500 9.500t-6.500 10h-9l-6-10z'),
    burst1: path('M4 9l6 2-1-5 4 4 4-6 1 6 6-2-4 5 6 4-6-1 2 6-5-4-1 7-3-6-5 5 1-6-5-1 4-3z'),
    burst2: path('M4 11l5-1-1-4 4 2 2-3 2 3 5-4-1 5 6-1-4 4 4 1-4 2 4 4-6-1 1 3-4-1-1 4-3-3-4 4v-4l-4 2 1-5-5-1 4-2-4-3z'),
    star4: path(star(4, 10.500, 4)), star5: path(star(5, 10.500, 4.300)), star6: path(star(6, 11, 7)),
    star7: path(star(7, 11.500, 8.500)),
    star8: num(star(8, 11, 8.300), 8), star10: num(star(10, 11.500, 9), 10), star12: num(star(12, 11, 7.800), 12),
    star16: num(star(14, 11, 8), 16), star24: num(star(16, 11, 8), 24), star32: num(star(18, 11, 8), 32),
    ribbonUp: path(ribbonUp),
    ribbonDown: turn(ribbonUp, 180),
    ribbonCurveUp: path('M9.500 9q5.500-3 11 0v9q-5.500-3-11 0zM9.500 11l-6 1 3 4-3 5 6-2M20.500 11l6 1-3 4 3 5-6-2'),
    ribbonCurveDown: path('M9.500 11q5.500 3 11 0v10q-5.500 3-11 0zM9.500 14l-6-6 2 7-2 5 6 2M20.500 14l6-6-2 7 2 5-6 2'),
    vScroll: path(vertScroll),
    hScroll: path('M8.500 7.500h14v-1q0-2 1.500-2t1.500 2v16h-17v1q0 2-2 2t-2-2v-14q0-2 2-2t2 2v13M22.500 7.500h3'),
    wave: path('M4.500 8c7-6 12 5 21 0v15c-8 5-14-5-21 0z'),
    wave2: path('M3.500 6q3-2 5.500 0t6 0 6 0 5.500 0v19q-3-2-5.500 0t-6 0-6 0-5.500 0z'),
    cRect: path('M4.500 4.500h20v16h-12l-4 5v-5h-4z'),
    cRound: path('M7.500 4.500h14q4 0 4 4v12h-21v-12q0-4 3-4z'),
    cEllipse: '<ellipse cx="15" cy="13.500" rx="10.500" ry="9"/>',
    cCloud: path('M6 14c-4-4 1-9 4-7 2-4 6-2 6 0 2-3 6-2 6 1 5 0 4 6 2 7v5H6z'),
    line1: path('M11.500 19V8.500h14V19'),
    line2: '<path stroke-dasharray="1 1" d="M13.500 8.500h12V19"/><path d="M12.500 8v13"/>'
};

const groups = [
    ['最近使用的形状', 'textbox vtextbox line arrowLine rect ellipse round triangle elbow elbowArrow right down freeform scribble arc curve lbrace rbrace'],
    ['线条', 'line arrowLine arrowLine2 elbow elbowArrow elbowArrow2 s sArrow sArrow2 curve freeform scribble'],
    ['矩形', 'rect round snip1 snip2 snipDiag snipRound round1 round2 roundDiag'],
    ['基本形状', 'textbox vtextbox ellipse triangle rightTri para trap diamond pentagon hexagon n7 n8 n10 n12 pie chord tear frame halfFrame lShape stripe cross plaque can cube bevel donut no blockArc note smile heart bolt sun moon cloud arc brackets braces lbracket rbracket lbrace rbrace'],
    ['箭头总汇', 'right left up down leftRight upDown quad triArrow bent uTurn leftUp bentUp curveR curveL curveU curveD striped notched pent chevron callR callD callL callU callLR callQ circular'],
    ['公式形状', 'plus minus times divide equal notEqual'],
    ['流程图', 'rect fRound fDiamond para predef internal docu docs term prep manual manualOp conn offPage card tape junction or collate sort triangle merge stored delay seq disk direct display'],
    ['星与旗帜', 'burst1 burst2 star4 star5 star6 star7 star8 star10 star12 star16 star24 star32 ribbonUp ribbonDown ribbonCurveUp ribbonCurveDown vScroll hScroll wave wave2'],
    ['标注', 'cRect cRound cEllipse cCloud line1 line1 line1 line2 line2 line2 line2 line2']
];

document.getElementById('gallery').innerHTML = groups.map(([title, names]) => {
    const stars = title === '星与旗帜';
    const cells = names.split(' ').map(name =>
        '<button class="shape' + (name === 'star5' ? ' on' : '') + '" aria-label="' + name + '"><svg width="30" height="30" viewBox="0 0 30 30">' + icons[name] + '</svg></button>'
    ).join('');
    return '<section class="' + (stars ? 'stars' : '') + '"><h3>' + title + '</h3><div class="shapes">' + cells + '</div>' +
        (stars ? '<div class="highlight"></div>' : '') + '</section>';
}).join('');

// settings gear with eight teeth
let gear = '';
for (let i = 0; i < 32; i++) {
    const a = Math.PI * 2 * (i - 0.5) / 32;
    const r = i % 4 < 2 ? 14 : 11;
    gear += (i ? 'L' : 'M') + (16 + r * Math.cos(a)).toFixed(1) + ' ' + (16 + r * Math.sin(a)).toFixed(1);
}
document.getElementById('gear').setAttribute('d', gear + 'z');
```
